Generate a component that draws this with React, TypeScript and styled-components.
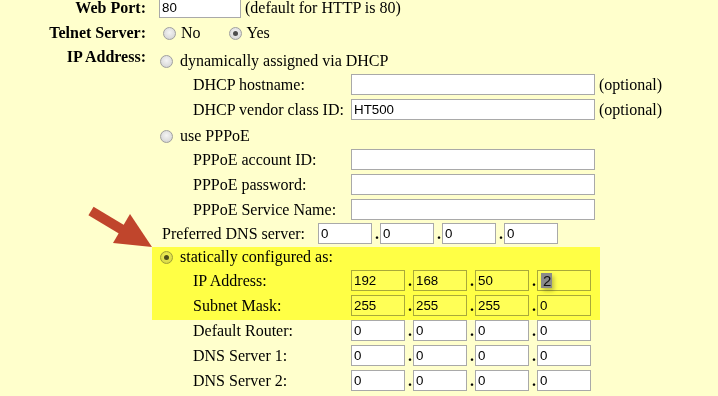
import React from "react";
import styled, { createGlobalStyle } from "styled-components";

const GlobalStyle = createGlobalStyle`
  html, body {
    margin: 0;
    background: #ffffcc;
    overflow: hidden;
  }
  body {
    font-family: "Liberation Serif", "Times New Roman", serif;
    font-size: 16px;
    color: #000;
  }
`;

const Page = styled.div`
  position: relative;
  margin-top: -3px;
`;

const Row = styled.div<{ $top: number; $align?: string }>`
  display: grid;
  grid-template-columns: 146px auto;
  column-gap: 13px;
  justify-content: start;
  align-items: ${(p) => p.$align || "center"};
  margin-top: ${(p) => p.$top}px;
  line-height: 20px;
`;

const FieldLabel = styled.div`
  font-weight: bold;
  text-align: right;
`;

const Inline = styled.div<{ $gap: number }>`
  display: flex;
  align-items: center;
  gap: ${(p) => p.$gap}px;
`;

const Input = styled.input<{ $w: number }>`
  box-sizing: border-box;
  width: ${(p) => p.$w}px;
  height: 21px;
  margin: 0;
  padding: 1px 2px;
  border: 1px solid #a9a9a9;
  background: #fff;
  font-family: "Liberation Sans", Arial, sans-serif;
  font-size: 13.33px;
  color: #000;
  outline: none;
  display: flex;
  align-items: center;
`;

const Selected = styled.span`
  position: relative;
  z-index: 2;
  display: inline-block;
  margin-left: 1px;
  padding: 0 1px 0 2px;
  line-height: 15px;
  background: #8a8a8a;
  color: #111;
  font-size: 15px;
  box-shadow: 2px 3px 4px rgba(0, 0, 0, 0.25);
`;

const Option = styled.label<{ $gap: number }>`
  display: inline-flex;
  align-items: center;
  gap: ${(p) => p.$gap}px;
  height: 20px;
`;

const Radio = styled.span<{ $checked?: boolean }>`
  box-sizing: border-box;
  display: inline-block;
  position: relative;
  width: 13px;
  height: 13px;
  border-radius: 50%;
  border: 1px solid #a0a0a0;
  background: radial-gradient(circle at 50% 40%, #f4f4f4 0%, #dedede 60%, #c9c9c9 100%);

  &::after {
    content: "";
    display: ${(p) => (p.$checked ? "block" : "none")};
    position: absolute;
    left: 3px;
    top: 3px;
    width: 5px;
    height: 5px;
    border-radius: 50%;
    background: #4d4d4d;
  }
`;

const TelnetOptions = styled.div`
  display: flex;
  align-items: center;
  gap: 28px;
  padding-left: 4px;
`;

const IpBlock = styled.div`
  display: flex;
  flex-direction: column;
  padding-top: 4px;
  margin-left: 1px;
`;

const RadioLine = styled.div<{ $top?: number }>`
  display: flex;
  align-items: center;
  gap: 7px;
  height: 20px;
  margin-top: ${(p) => p.$top || 0}px;
`;

const SubList = styled.div<{ $indent: number; $top: number }>`
  display: flex;
  flex-direction: column;
  gap: 4px;
  padding-left: ${(p) => p.$indent}px;
  margin-top: ${(p) => p.$top}px;
`;

const SubRow = styled.div`
  display: flex;
  align-items: center;
  gap: 4px;
  height: 21px;
`;

const SubLabel = styled.div<{ $w: number }>`
  width: ${(p) => p.$w}px;
  flex-shrink: 0;
  white-space: nowrap;
`;

const Quad = styled.div`
  display: flex;
  align-items: center;
`;

const Dot = styled.span`
  width: 8px;
  padding-right: 1px;
  box-sizing: border-box;
  text-align: right;
  font-weight: bold;
  line-height: 21px;
`;

const Highlight = styled.div`
  position: relative;
  margin-top: 3px;
  padding-bottom: 4px;
`;

const HighlightMark = styled.div`
  position: absolute;
  top: 0;
  bottom: 0;
  left: -8px;
  width: 448px;
  background: #ffff56;
  mix-blend-mode: multiply;
  pointer-events: none;
  z-index: 1;
`;

const Arrow = styled.svg`
  position: absolute;
  left: 0;
  top: 3px;
  pointer-events: none;
  z-index: 3;
`;

type Octets = (string | React.ReactNode)[];

const IpQuad = ({ values }: { values: Octets }) => (
  <Quad>
    {values.map((v, i) => (
      <React.Fragment key={i}>
        {i > 0 && <Dot>.</Dot>}
        {typeof v === "string" ? (
          <Input $w={54} defaultValue={v} />
        ) : (
          <Input as="div" $w={54}>
            {v}
          </Input>
        )}
      </React.Fragment>
    ))}
  </Quad>
);

const zeros = ["0", "0", "0", "0"];

export default function App() {
  return (
    <Page>
      <GlobalStyle />

      <Row $top={0}>
        <FieldLabel>Web Port:</FieldLabel>
        <Inline $gap={4}>
          <Input $w={82} defaultValue="80" />
          <span>(default for HTTP is 80)</span>
        </Inline>
      </Row>

      <Row $top={5}>
        <FieldLabel>Telnet Server:</FieldLabel>
        <TelnetOptions>
          <Option $gap={5}>
            <Radio />
            No
          </Option>
          <Option $gap={5}>
            <Radio $checked />
            Yes
          </Option>
        </TelnetOptions>
      </Row>

      <Row $top={4} $align="start">
        <FieldLabel>IP Address:</FieldLabel>
        <IpBlock>
          <RadioLine>
            <Radio />
            dynamically assigned via DHCP
          </RadioLine>
          <SubList $indent={33} $top={3}>
            <SubRow>
              <SubLabel $w={154}>DHCP hostname:</SubLabel>
              <Input $w={244} />
              <span>(optional)</span>
            </SubRow>
            <SubRow>
              <SubLabel $w={154}>DHCP vendor class ID:</SubLabel>
              <Input $w={244} defaultValue="HT500" />
              <span>(optional)</span>
            </SubRow>
          </SubList>

          <RadioLine $top={6}>
            <Radio />
            use PPPoE
          </RadioLine>
          <SubList $indent={33} $top={3}>
            <SubRow>
              <SubLabel $w={154}>PPPoE account ID:</SubLabel>
              <Input $w={244} />
            </SubRow>
            <SubRow>
              <SubLabel $w={154}>PPPoE password:</SubLabel>
              <Input $w={244} type="text" />
            </SubRow>
            <SubRow>
              <SubLabel $w={154}>PPPoE Service Name:</SubLabel>
              <Input $w={244} />
            </SubRow>
          </SubList>

          <SubList $indent={2} $top={3}>
            <SubRow>
              <SubLabel $w={152}>Preferred DNS server:</SubLabel>
              <IpQuad values={zeros} />
            </SubRow>
          </SubList>

          <Highlight>
            <HighlightMark />
            <RadioLine>
              <Radio $checked />
              statically configured as:
            </RadioLine>
            <SubList $indent={33} $top={3}>
              <SubRow>
                <SubLabel $w={154}>IP Address:</SubLabel>
                <IpQuad values={["192", "168", "50", <Selected key="s">2</Selected>]} />
              </SubRow>
              <SubRow>
                <SubLabel $w={154}>Subnet Mask:</SubLabel>
                <IpQuad values={["255", "255", "255", "0"]} />
              </SubRow>
            </SubList>
          </Highlight>

          <SubList $indent={33} $top={0}>
            <SubRow>
              <SubLabel $w={154}>Default Router:</SubLabel>
              <IpQuad values={zeros} />
            </SubRow>
            <SubRow>
              <SubLabel $w={154}>DNS Server 1:</SubLabel>
              <IpQuad values={zeros} />
            </SubRow>
            <SubRow>
              <SubLabel $w={154}>DNS Server 2:</SubLabel>
              <IpQuad values={zeros} />
            </SubRow>
          </SubList>
        </IpBlock>
      </Row>

      <Arrow width="170" height="260" viewBox="0 0 170 260">
        <line x1="91" y1="211" x2="126" y2="232" stroke="#c0452c" strokeWidth="10" />
        <polygon points="152,247 130,214 113,243" fill="#c0452c" />
      </Arrow>
    </Page>
  );
}
